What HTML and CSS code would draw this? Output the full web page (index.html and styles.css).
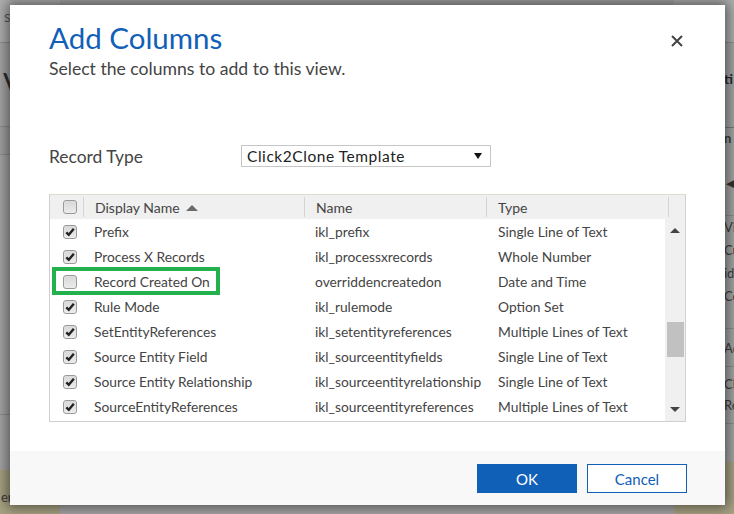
FILE: index.html
```html
<!DOCTYPE html>
<html>
<head>
<meta charset="utf-8">
<link rel="stylesheet" href="styles.css">
</head>
<body>
<div class="page">
  <div class="pg-col pg-left">
    <div class="pg-top"><span class="pg-s">S</span></div>
    <div class="pg-hero"><span class="pg-v">V</span></div>
    <div class="pg-band"></div>
    <div class="pg-plain"></div>
    <div class="pg-gap"></div>
    <div class="pg-olive"><span class="pg-er">er</span></div>
  </div>
  <div class="pg-col pg-right">
    <div class="pg-top"></div>
    <div class="pg-hero-r"><b>ti</b></div>
    <div class="pg-sec"><b>n</b><span class="pg-tri">◀</span></div>
    <div class="pg-list"><span>Vie</span><span>Cu</span><span>id</span><span>Co</span></div>
    <div class="pg-item"><span>Ad</span></div>
    <div class="pg-list2"><span>Ch</span><span>Re</span></div>
    <div class="pg-rest"></div>
    <div class="pg-olive"></div>
  </div>
</div>

<div class="dialog">
  <div class="dlg-head">
    <div class="dlg-titles">
      <h1 class="title">Add Columns</h1>
      <p class="subtitle">Select the columns to add to this view.</p>
    </div>
    <button class="close" aria-label="Close">
      <svg width="12" height="12" viewBox="0 0 12 12"><path d="M1 1 L11 11 M11 1 L1 11" stroke="#444" stroke-width="2" fill="none"/></svg>
    </button>
  </div>

  <div class="rt-row">
    <div class="rt-label">Record Type</div>
    <div class="select">
      <span>Click2Clone Template</span>
      <svg width="8" height="6" viewBox="0 0 8 6"><path d="M0 0 H8 L4 6 Z" fill="#111"/></svg>
    </div>
  </div>

  <div class="grid">
    <div class="grid-head">
      <div class="cb-cell"><span class="chk"></span></div>
      <div class="hd">Display Name <svg class="sort" width="12" height="6" viewBox="0 0 12 6"><path d="M0 6 L6 0 L12 6 Z" fill="#6a6a6a"/></svg></div>
      <div class="hd">Name</div>
      <div class="hd">Type</div>
      <div class="hd hd-sb"></div>
    </div>
    <div class="grid-body">
      <div class="rows">
        <div class="row"><div class="cb-cell"><span class="chk on"><svg width="12" height="12" viewBox="0 0 12 12"><path d="M2.3 6.3 L4.8 8.8 L9.8 2.8" stroke="#222" stroke-width="2.4" fill="none"/></svg></span></div><div class="c">Prefix</div><div class="c">ikl_prefix</div><div class="c">Single Line of Text</div></div>
        <div class="row"><div class="cb-cell"><span class="chk on"><svg width="12" height="12" viewBox="0 0 12 12"><path d="M2.3 6.3 L4.8 8.8 L9.8 2.8" stroke="#222" stroke-width="2.4" fill="none"/></svg></span></div><div class="c">Process X Records</div><div class="c">ikl_processxrecords</div><div class="c">Whole Number</div></div>
        <div class="row row-mark"><div class="cb-cell"><span class="chk"></span></div><div class="c">Record Created On</div><div class="c">overriddencreatedon</div><div class="c">Date and Time</div><span class="highlight"></span></div>
        <div class="row"><div class="cb-cell"><span class="chk on"><svg width="12" height="12" viewBox="0 0 12 12"><path d="M2.3 6.3 L4.8 8.8 L9.8 2.8" stroke="#222" stroke-width="2.4" fill="none"/></svg></span></div><div class="c">Rule Mode</div><div class="c">ikl_rulemode</div><div class="c">Option Set</div></div>
        <div class="row"><div class="cb-cell"><span class="chk on"><svg width="12" height="12" viewBox="0 0 12 12"><path d="M2.3 6.3 L4.8 8.8 L9.8 2.8" stroke="#222" stroke-width="2.4" fill="none"/></svg></span></div><div class="c">SetEntityReferences</div><div class="c">ikl_setentityreferences</div><div class="c">Multiple Lines of Text</div></div>
        <div class="row"><div class="cb-cell"><span class="chk on"><svg width="12" height="12" viewBox="0 0 12 12"><path d="M2.3 6.3 L4.8 8.8 L9.8 2.8" stroke="#222" stroke-width="2.4" fill="none"/></svg></span></div><div class="c">Source Entity Field</div><div class="c">ikl_sourceentityfields</div><div class="c">Single Line of Text</div></div>
        <div class="row"><div class="cb-cell"><span class="chk on"><svg width="12" height="12" viewBox="0 0 12 12"><path d="M2.3 6.3 L4.8 8.8 L9.8 2.8" stroke="#222" stroke-width="2.4" fill="none"/></svg></span></div><div class="c">Source Entity Relationship</div><div class="c">ikl_sourceentityrelationship</div><div class="c">Single Line of Text</div></div>
        <div class="row"><div class="cb-cell"><span class="chk on"><svg width="12" height="12" viewBox="0 0 12 12"><path d="M2.3 6.3 L4.8 8.8 L9.8 2.8" stroke="#222" stroke-width="2.4" fill="none"/></svg></span></div><div class="c">SourceEntityReferences</div><div class="c">ikl_sourceentityreferences</div><div class="c">Multiple Lines of Text</div></div>
      </div>
      <div class="scrollbar">
        <svg class="sb-arrow" width="10" height="5" viewBox="0 0 10 5"><path d="M0 5 L5 0 L10 5 Z" fill="#444"/></svg>
        <div class="sb-track"><div class="sb-thumb"></div></div>
        <svg class="sb-arrow" width="10" height="5" viewBox="0 0 10 5"><path d="M0 0 L10 0 L5 5 Z" fill="#444"/></svg>
      </div>
    </div>
  </div>

  <div class="footer">
    <button class="btn ok">OK</button>
    <button class="btn cancel">Cancel</button>
  </div>
</div>
</body>
</html>
```

FILE: styles.css
```css
* { box-sizing: border-box; }

body {
  margin: 0;
  width: 734px;
  height: 514px;
  overflow: hidden;
  position: relative;
  background: #a6a6a6;
  font-family: Lato, "Segoe UI", sans-serif;
}

/* ---------- background page (dimmed) ---------- */
.page {
  display: flex;
  justify-content: space-between;
  height: 514px;
  color: #3e3e3e;
  font-size: 13px;
}
.pg-col {
  width: 60px;
  display: flex;
  flex-direction: column;
}
.pg-top {
  height: 43px;
  background: #b0b0b0;
  border-bottom: 1px solid #8e8e8e;
}
.pg-s {
  display: block;
  padding: 10px 0 0 4px;
  font-size: 12px;
  color: #555;
}
.pg-hero {
  height: 84px;
  border-bottom: 1px solid #8e8e8e;
}
.pg-v {
  display: block;
  padding: 22px 0 0 3px;
  font-size: 30px;
  color: #2e2e2e;
}
.pg-band {
  height: 28px;
  background: #a2a2a2;
  border-bottom: 1px solid #8e8e8e;
}
.pg-plain {
  height: 260px;
  border-bottom: 1px solid #8e8e8e;
}
.pg-gap { height: 55px; }
.pg-olive {
  flex: 1;
  background: #a9a384;
}
.pg-er {
  display: block;
  padding: 19px 0 0 1px;
  font-size: 13px;
  color: #3a3a3a;
}

.pg-right > div { padding-left: 50px; }
.pg-hero-r {
  height: 85px;
  border-bottom: 1px solid #7a7a7a;
  padding-top: 27px;
  font-size: 14px;
  color: #2a2a2a;
}
.pg-sec {
  height: 88px;
  border-bottom: 1px solid #8e8e8e;
  display: flex;
  flex-direction: column;
  align-items: flex-start;
  padding-top: 2px;
  font-size: 13px;
}
.pg-tri {
  margin-top: 30px;
  margin-left: 2px;
  font-size: 11px;
  color: #333;
}
.pg-list {
  height: 113px;
  border-bottom: 1px solid #8e8e8e;
  display: flex;
  flex-direction: column;
  padding-top: 3px;
  gap: 6px;
  line-height: 17px;
}
.pg-item {
  height: 38px;
  border-bottom: 1px solid #8e8e8e;
  padding-top: 11px;
}
.pg-list2 {
  height: 57px;
  border-bottom: 1px solid #8e8e8e;
  display: flex;
  flex-direction: column;
  padding-top: 9px;
  gap: 4px;
  line-height: 17px;
}
.pg-rest { height: 38px; }

/* ---------- dialog ---------- */
.dialog {
  position: absolute;
  left: 10px;
  top: 5px;
  width: 715px;
  height: 500px;
  background: #fff;
  box-shadow: 0 0 12px 3px rgba(0, 0, 0, 0.5);
  display: flex;
  flex-direction: column;
  color: #444;
}

.dlg-head {
  display: flex;
  justify-content: space-between;
  align-items: flex-start;
  padding: 15px 42px 0 39px;
}
.title {
  margin: 0;
  font-size: 29.5px;
  line-height: 35px;
  font-weight: 400;
  color: #1160b7;
}
.subtitle {
  margin: 4px 0 0;
  font-size: 17.6px;
  line-height: 20px;
  color: #444;
}
.close {
  margin-top: 15px;
  padding: 0;
  border: 0;
  background: none;
  width: 12px;
  height: 12px;
  display: flex;
}

.rt-row {
  display: flex;
  align-items: center;
  margin: 66px 39px 0;
  height: 22px;
}
.rt-label {
  width: 192px;
  font-size: 17.4px;
  color: #444;
}
.select {
  width: 250px;
  height: 22px;
  border: 1px solid #c6c6c6;
  display: flex;
  align-items: center;
  justify-content: space-between;
  padding: 0 8px 1px 5px;
  font-size: 15.5px;
  letter-spacing: 0.55px;
  color: #222;
}

.grid {
  margin: 27px 39px 0;
  border: 1px solid #cfcfcf;
  border-top-color: #dedbd0;
}
.grid-head {
  display: grid;
  grid-template-columns: 33px 221px 182px 182px 1fr;
  height: 24px;
  background: #f0f0f0;
  align-items: center;
}
.hd {
  height: 20px;
  border-left: 1px solid #d4d4d4;
  display: flex;
  align-items: center;
  padding-left: 11px;
  font-size: 14px;
  color: #444;
}
.sort { margin-left: 6px; margin-top: 1px; }
.cb-cell {
  display: flex;
  align-items: center;
  padding-left: 13px;
  height: 100%;
}
.chk {
  width: 14px;
  height: 14px;
  border: 1px solid #999;
  border-radius: 3px;
  background: linear-gradient(#d8d8d8, #ebebeb);
  box-shadow: inset 0 0 1px #fff;
  display: flex;
  align-items: center;
  justify-content: center;
}

.grid-body {
  display: flex;
  height: 202px;
}
.rows {
  flex: 1;
}
.row {
  position: relative;
  display: grid;
  grid-template-columns: 33px 221px 182px 1fr;
  height: 25px;
  align-items: center;
  font-size: 13.8px;
  color: #444;
}
.c { padding-left: 11px; white-space: nowrap; }
.c:nth-child(4) { padding-left: 12px; }
.highlight {
  position: absolute;
  left: 2px;
  top: -2px;
  width: 168px;
  height: 28px;
  border: 4px solid #22b14c;
}

.scrollbar {
  width: 20px;
  background: #f0f0f0;
  display: flex;
  flex-direction: column;
  align-items: center;
  padding: 9px 0 9px;
}
.sb-track {
  flex: 1;
  width: 100%;
  padding: 89px 1px 0 2px;
}
.sb-thumb {
  height: 35px;
  background: #c1c1c1;
}

.footer {
  margin-top: auto;
  height: 54px;
  background: #f8f8f8;
  display: flex;
  justify-content: flex-end;
  gap: 10px;
  padding: 13px 38px 0 0;
}
.btn {
  width: 100px;
  height: 29px;
  font-family: Lato, "Segoe UI", sans-serif;
  font-size: 15px;
  border: 1px solid #1160b7;
  padding: 0;
}
.ok { background: #1160b7; color: #fff; }
.cancel { background: #fff; color: #1160b7; }
```
